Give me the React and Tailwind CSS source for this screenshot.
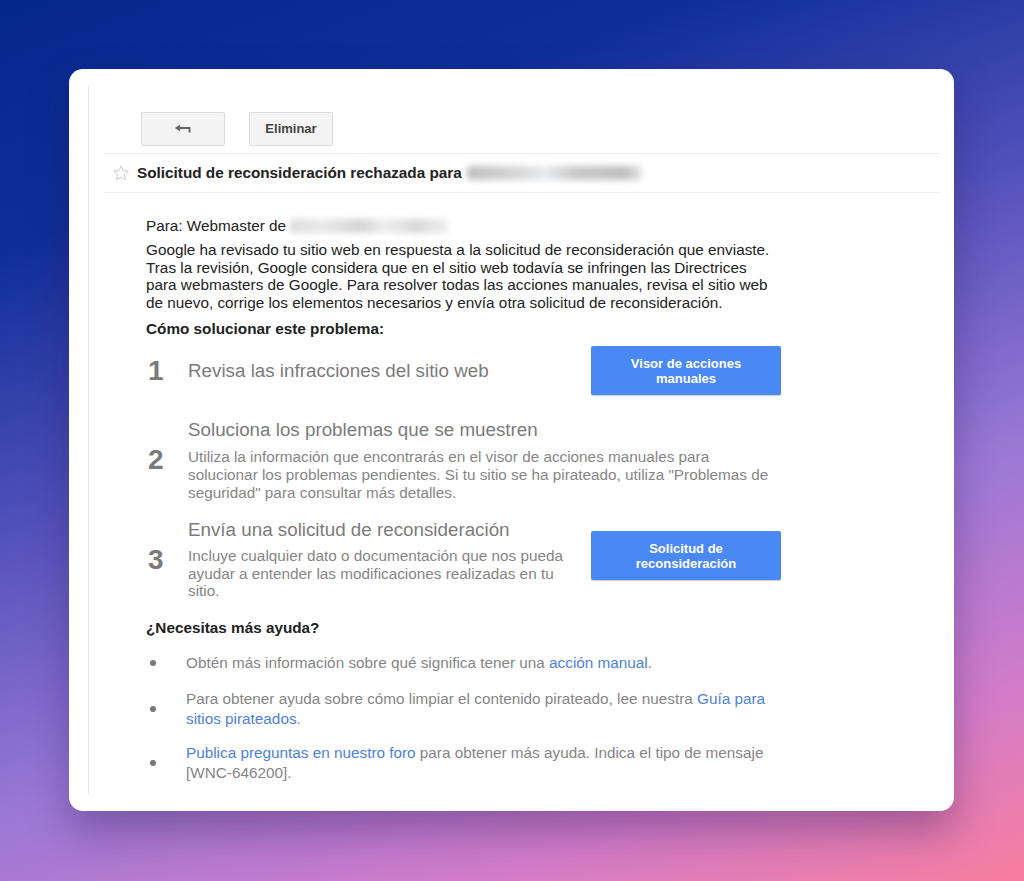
import React from 'react';

// Small reply arrow used in the toolbar
const BackArrow = () => (
  <svg width="18" height="10" viewBox="0 0 18 10" fill="none">
    <path d="M1 4 L6 0.5 L6 7.5 Z" fill="#666" />
    <path d="M5 4 H15.5 V8.5" stroke="#666" strokeWidth="2" fill="none" />
  </svg>
);

const Star = () => (
  <svg width="18" height="18" viewBox="0 0 24 24" fill="none">
    <path
      d="M12 2.5l2.9 6.3 6.9.7-5.2 4.6 1.5 6.8L12 17.4l-6.1 3.5 1.5-6.8L2.2 9.5l6.9-.7z"
      stroke="#c8c8c8"
      strokeWidth="1.3"
      strokeLinejoin="round"
    />
  </svg>
);

const Step = ({ n, title, children, button, buttonClass = '' }) => (
  <div className="flex items-center">
    <div className="w-[42px] pl-[2px] text-[28px] font-bold text-[#7a7a7a] leading-none">{n}</div>
    <div className="flex-1">
      <div className="text-[18.8px] leading-[22px] text-[#7b7b7b] whitespace-nowrap">{title}</div>
      {children}
    </div>
    {button && (
      <button className={'w-[190px] h-[49px] shrink-0 rounded-[2px] bg-[#4a89f3] text-white text-[13px] font-bold leading-[15px] shadow-[0_1px_1px_rgba(0,0,0,0.2)] ' + buttonClass}>
        {button}
      </button>
    )}
  </div>
);

const Bullet = ({ children, className }) => (
  <div className={'flex items-center ' + className}>
    <div className="w-[40px] pl-[4px]">
      <div className="w-[6px] h-[6px] rounded-full bg-[#777]"></div>
    </div>
    <div className="text-[15.3px] leading-[20px] text-[#858585] whitespace-nowrap">{children}</div>
  </div>
);

const Link = ({ children }) => <span className="text-[#4d7fe0]">{children}</span>;

export default function App() {
  return (
    <div
      className="w-full h-[881px] overflow-hidden pt-[69px] pl-[69px] bg-[linear-gradient(160deg,#05288c_0%,#0f2e98_20%,#5050ba_42%,#9a78d6_65%,#d27cca_84%,#f87e9e_100%)]"
      style={{ fontFamily: '"Liberation Sans", Arial, sans-serif' }}
    >
      <div className="w-[885px] h-[742px] rounded-[14px] bg-white pt-[16px] pl-[19px] shadow-[0_20px_40px_rgba(40,20,80,0.35)]">
        <div className="h-[710px] border-l border-[#e6e6e6] pl-[15px] pr-[14px]">
          {/* toolbar */}
          <div className="flex gap-[24px] pt-[27px] pl-[37px]">
            <button className="w-[84px] h-[34px] flex items-center justify-center bg-[#f4f4f4] border border-[#dcdcdc] rounded-[2px]">
              <BackArrow />
            </button>
            <button className="w-[84px] h-[34px] bg-[#f4f4f4] border border-[#dcdcdc] rounded-[2px] text-[13px] font-bold text-[#444]">
              Eliminar
            </button>
          </div>

          {/* subject */}
          <div className="mt-[7px] h-[40px] border-t border-b border-[#ececec] flex items-center pl-[8px]">
            <Star />
            <span className="ml-[7px] text-[15.3px] font-bold text-[#222] whitespace-nowrap">
              Solicitud de reconsideración rechazada para
            </span>
            <span className="ml-[5px] w-[175px] h-[14px] rounded-sm bg-[linear-gradient(90deg,#bdbdbd,#d8d8d8_30%,#e8eaee_45%,#c9c9c9_60%,#bfbfbf_90%,#e4e4e4)] blur-[3px]"></span>
          </div>

          {/* body */}
          <div className="pl-[42px] pt-[24px] text-[15.3px] text-[#222]">
            <div className="flex items-center h-[18px] leading-[18px]">
              <span>Para: Webmaster de</span>
              <span className="ml-[4px] w-[158px] h-[14px] bg-[linear-gradient(90deg,#dcdcdc,#e9e9e9_20%,#d4d4d4_45%,#eeeeee_60%,#d8d8d8_80%,#efefef)] blur-[3px]"></span>
            </div>
            <p className="mt-[6px] leading-[17.6px] whitespace-nowrap">
              Google ha revisado tu sitio web en respuesta a la solicitud de reconsideración que enviaste.
              <br />
              Tras la revisión, Google considera que en el sitio web todavía se infringen las Directrices
              <br />
              para webmasters de Google. Para resolver todas las acciones manuales, revisa el sitio web
              <br />
              de nuevo, corrige los elementos necesarios y envía otra solicitud de reconsideración.
            </p>
            <div className="mt-[9px] leading-[18px] font-bold">Cómo solucionar este problema:</div>

            <div className="w-[635px]">
              <div className="mt-[8px]">
                <Step n="1" title="Revisa las infracciones del sitio web" button={<>Visor de acciones<br />manuales</>} />
              </div>
              <div className="mt-[24px]">
                <Step n="2" title="Soluciona los problemas que se muestren">
                  <p className="mt-[7px] text-[15.3px] leading-[17.6px] text-[#868686] whitespace-nowrap">
                    Utiliza la información que encontrarás en el visor de acciones manuales para
                    <br />
                    solucionar los problemas pendientes. Si tu sitio se ha pirateado, utiliza "Problemas de
                    <br />
                    seguridad" para consultar más detalles.
                  </p>
                </Step>
              </div>
              <div className="mt-[18px]">
                <Step
                  n="3"
                  title="Envía una solicitud de reconsideración"
                  buttonClass="mb-[8px]"
                  button={<>Solicitud de<br />reconsideración</>}
                >
                  <p className="mt-[6px] text-[15.3px] leading-[17.6px] text-[#868686] whitespace-nowrap">
                    Incluye cualquier dato o documentación que nos pueda
                    <br />
                    ayudar a entender las modificaciones realizadas en tu
                    <br />
                    sitio.
                  </p>
                </Step>
              </div>
            </div>

            <div className="mt-[19px] leading-[18px] font-bold">¿Necesitas más ayuda?</div>

            <Bullet className="mt-[16px]">
              Obtén más información sobre qué significa tener una <Link>acción manual</Link>.
            </Bullet>
            <Bullet className="mt-[16px]">
              Para obtener ayuda sobre cómo limpiar el contenido pirateado, lee nuestra <Link>Guía para</Link>
              <br />
              <Link>sitios pirateados</Link>.
            </Bullet>
            <Bullet className="mt-[14px]">
              <Link>Publica preguntas en nuestro foro</Link> para obtener más ayuda. Indica el tipo de mensaje
              <br />
              [WNC-646200].
            </Bullet>
          </div>
        </div>
      </div>
    </div>
  );
}
